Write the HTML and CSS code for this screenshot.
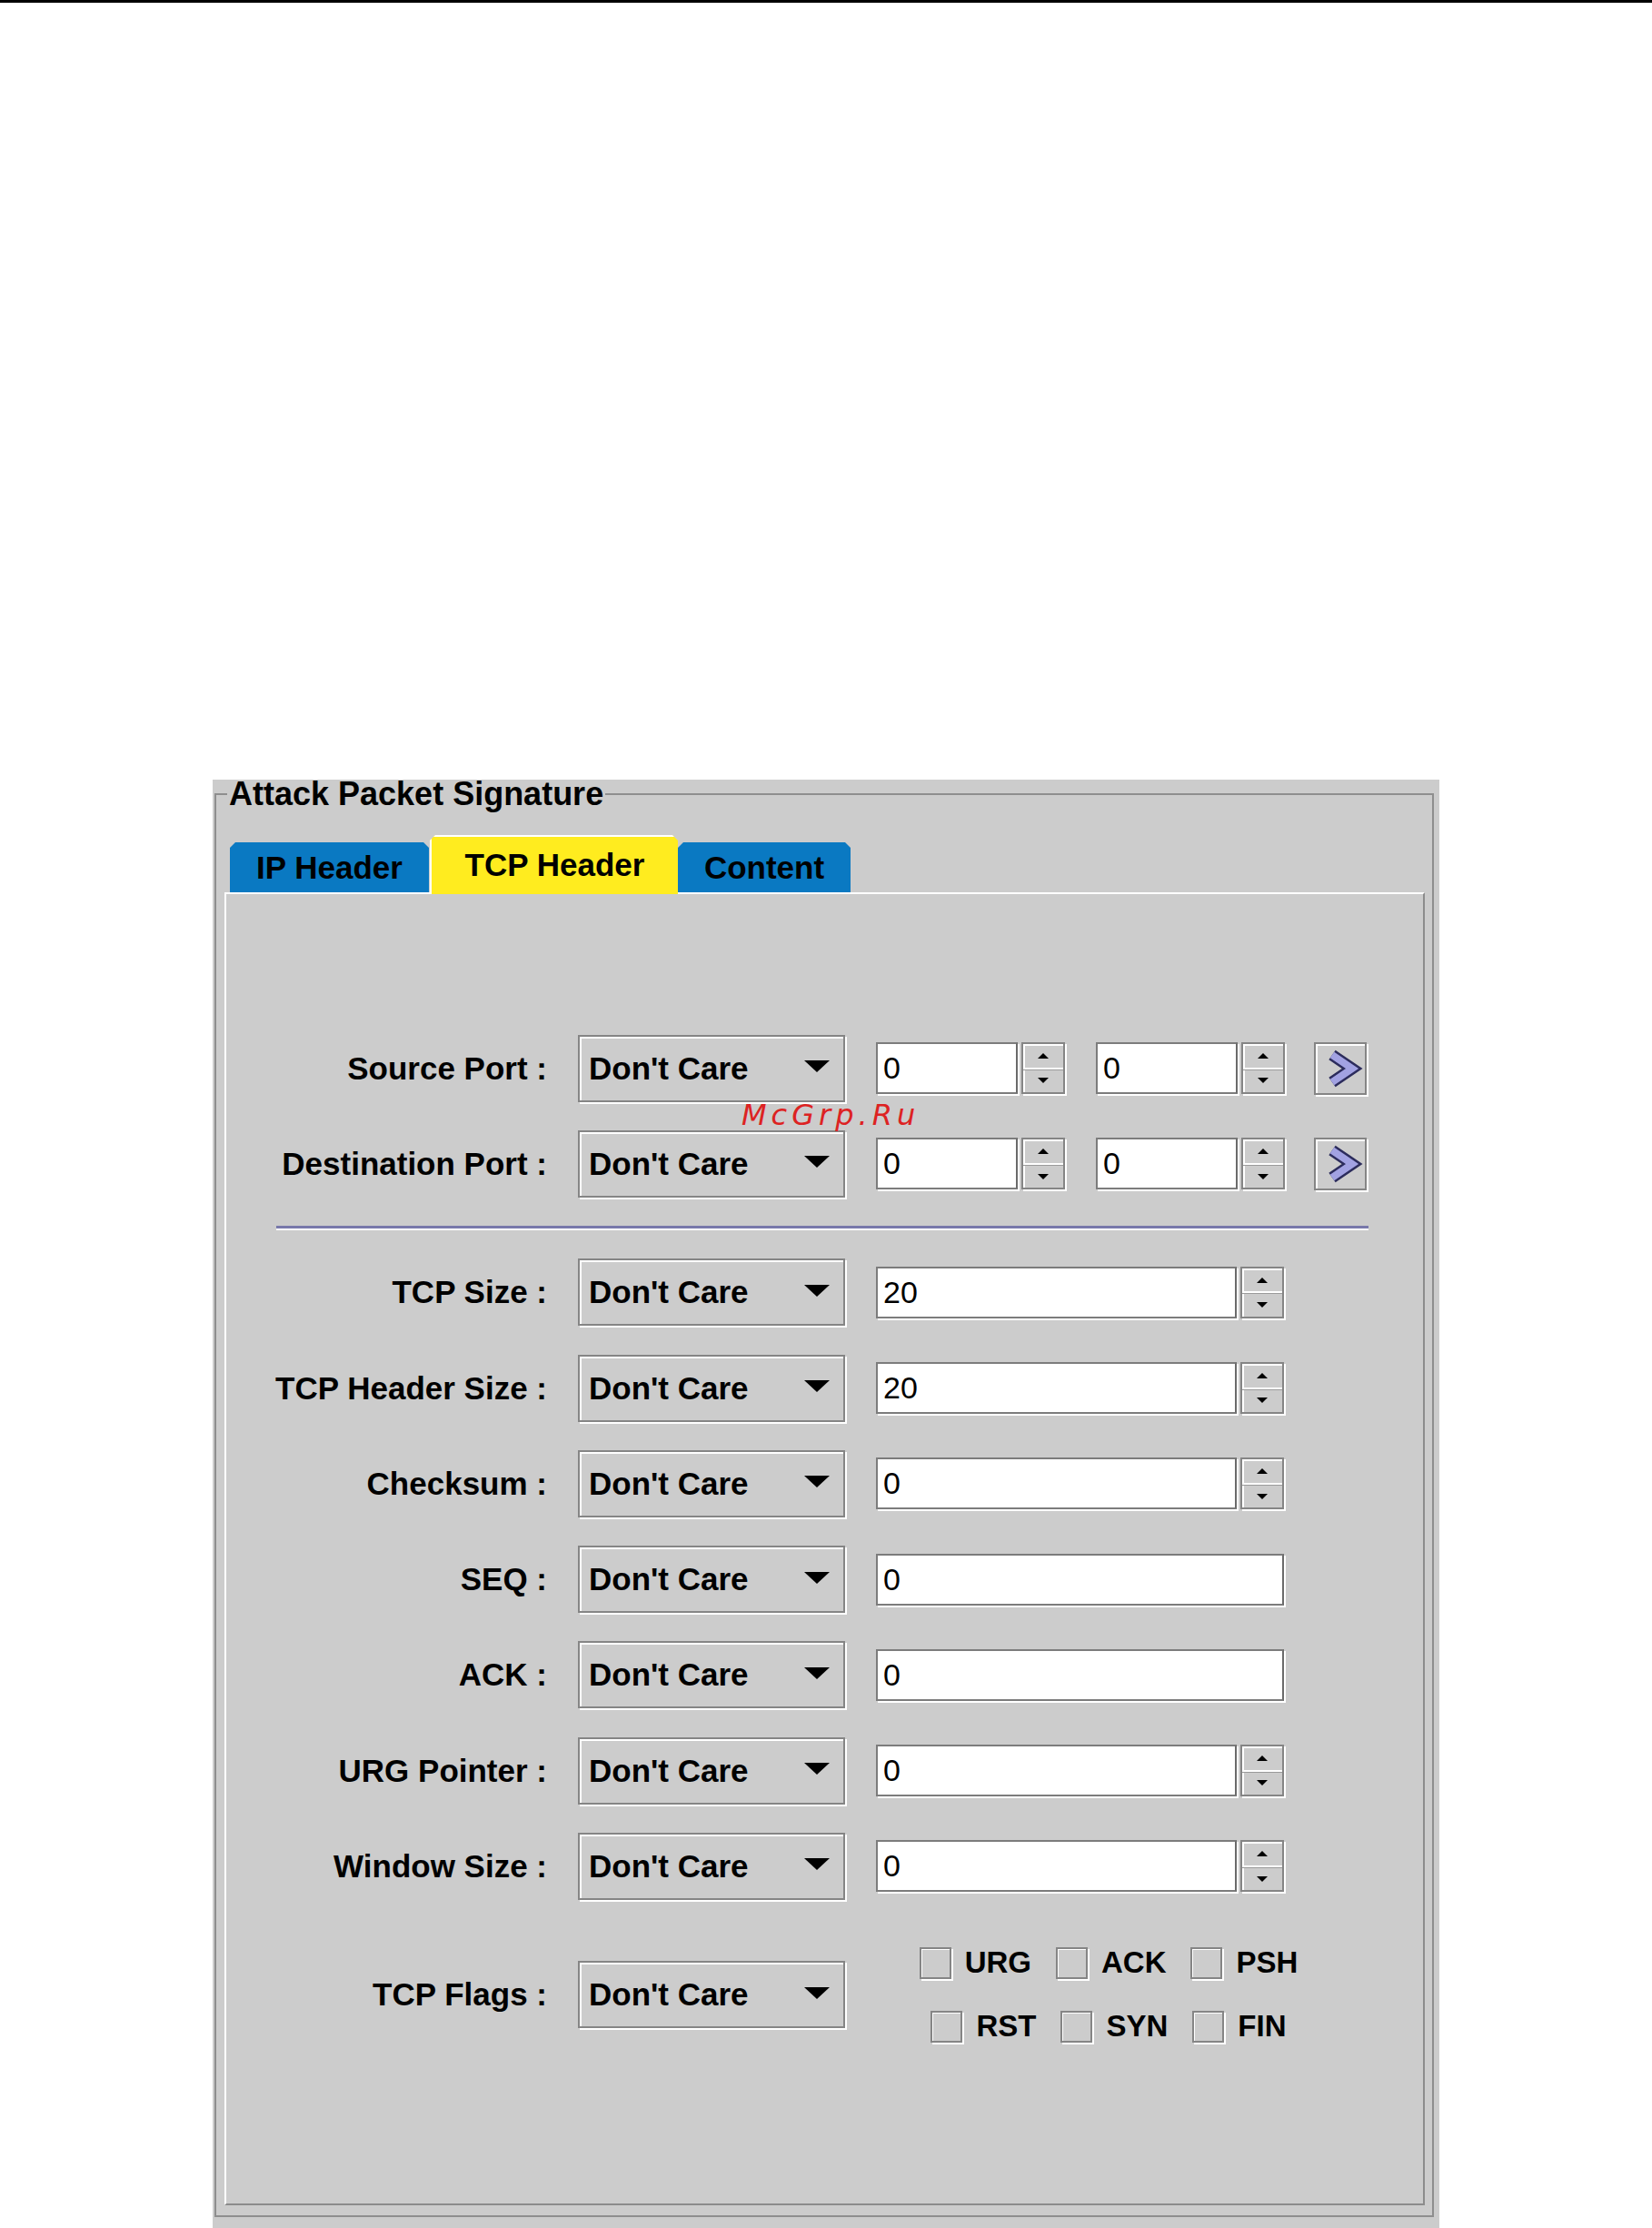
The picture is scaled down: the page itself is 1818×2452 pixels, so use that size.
FILE: index.html
```html
<html>
    <head>
        <title>Attack Packet Signature</title>
        <link rel="stylesheet" href="styles.css">
    </head>
    <body>
        <div class="topline"></div>
        <div class="panel">
            <fieldset class="sig">
                <legend>Attack Packet Signature</legend>
                <div class="tabs">
                    <div class="tab tab-ip">IP Header</div>
                    <div class="tab tab-tcp active">TCP Header</div>
                    <div class="tab tab-content">Content</div>
                </div>
                <div class="tab-body">
                    <div class="form">
                        <label class="lbl">Source Port :</label>
                        <div class="combo"><span>Don't Care</span><i class="caret"></i></div>
                        <div class="fields">
                            <input class="num w-s" value="0" />
                            <div class="spin"><b class="up"></b><b class="down"></b></div>
                            <input class="num w-s gap-l" value="0" />
                            <div class="spin"><b class="up"></b><b class="down"></b></div>
                            <button class="go"><svg width="54" height="54" viewBox="0 0 54 54"><path d="M18 12 L40 27 L18 42" fill="none" stroke="#2c2c5c" stroke-width="13"/><path d="M18 12 L40 27 L18 42" fill="none" stroke="#a2a2e2" stroke-width="8"/></svg></button>
                        </div>

                        <label class="lbl">Destination Port :</label>
                        <div class="combo"><span>Don't Care</span><i class="caret"></i></div>
                        <div class="fields">
                            <input class="num w-s" value="0" />
                            <div class="spin"><b class="up"></b><b class="down"></b></div>
                            <input class="num w-s gap-l" value="0" />
                            <div class="spin"><b class="up"></b><b class="down"></b></div>
                            <button class="go"><svg width="54" height="54" viewBox="0 0 54 54"><path d="M18 12 L40 27 L18 42" fill="none" stroke="#2c2c5c" stroke-width="13"/><path d="M18 12 L40 27 L18 42" fill="none" stroke="#a2a2e2" stroke-width="8"/></svg></button>
                        </div>

                        <div class="sep"></div>

                        <label class="lbl">TCP Size :</label>
                        <div class="combo"><span>Don't Care</span><i class="caret"></i></div>
                        <div class="fields">
                            <input class="num w-m" value="20" />
                            <div class="spin"><b class="up"></b><b class="down"></b></div>
                        </div>

                        <label class="lbl">TCP Header Size :</label>
                        <div class="combo"><span>Don't Care</span><i class="caret"></i></div>
                        <div class="fields">
                            <input class="num w-m" value="20" />
                            <div class="spin"><b class="up"></b><b class="down"></b></div>
                        </div>

                        <label class="lbl">Checksum :</label>
                        <div class="combo"><span>Don't Care</span><i class="caret"></i></div>
                        <div class="fields">
                            <input class="num w-m" value="0" />
                            <div class="spin"><b class="up"></b><b class="down"></b></div>
                        </div>

                        <label class="lbl">SEQ :</label>
                        <div class="combo"><span>Don't Care</span><i class="caret"></i></div>
                        <div class="fields">
                            <input class="num w-l" value="0" />
                        </div>

                        <label class="lbl">ACK :</label>
                        <div class="combo"><span>Don't Care</span><i class="caret"></i></div>
                        <div class="fields">
                            <input class="num w-l" value="0" />
                        </div>

                        <label class="lbl">URG Pointer :</label>
                        <div class="combo"><span>Don't Care</span><i class="caret"></i></div>
                        <div class="fields">
                            <input class="num w-m" value="0" />
                            <div class="spin"><b class="up"></b><b class="down"></b></div>
                        </div>

                        <label class="lbl">Window Size :</label>
                        <div class="combo"><span>Don't Care</span><i class="caret"></i></div>
                        <div class="fields">
                            <input class="num w-m" value="0" />
                            <div class="spin"><b class="up"></b><b class="down"></b></div>
                        </div>

                        <label class="lbl last">TCP Flags :</label>
                        <div class="combo last"><span>Don't Care</span><i class="caret"></i></div>
                        <div class="flags last">
                            <div class="flag-row">
                                <span class="flag"><i class="box"></i>URG</span>
                                <span class="flag"><i class="box"></i>ACK</span>
                                <span class="flag"><i class="box"></i>PSH</span>
                            </div>
                            <div class="flag-row">
                                <span class="flag"><i class="box"></i>RST</span>
                                <span class="flag"><i class="box"></i>SYN</span>
                                <span class="flag"><i class="box"></i>FIN</span>
                            </div>
                        </div>
                    </div>
                </div>
            </fieldset>
        </div>
        <div class="watermark">McGrp.Ru</div>
    </body>
</html>
```

FILE: styles.css
```css
html, body {
    margin: 0;
    overflow: hidden;
    background: #fff;
}

body {
    position: relative;
    font-family: "Liberation Sans", Arial, sans-serif;
    color: #000;
}

.topline {
    height: 3px;
    background: #000;
}

.panel {
    margin: 855px 0 0 234px;
    width: 1350px;
    height: 1594px;
    box-sizing: border-box;
    padding: 0 6px 0 2px;
    background: #cccccc;
}

.sig {
    margin: 0;
    padding: 29px 8px 11px 9px;
    border: 2px solid #8e8e8e;
}

.sig legend {
    margin-left: 3px;
    padding: 0 2px;
    font: bold 36px/32px "Liberation Sans", Arial, sans-serif;
}

.tabs {
    display: flex;
    align-items: flex-end;
    height: 63px;
    margin-left: 6px;
}

.tab {
    height: 55px;
    box-sizing: border-box;
    display: flex;
    align-items: center;
    justify-content: center;
    background: #0a79c2;
    font: bold 35px "Liberation Sans", Arial, sans-serif;
    clip-path: polygon(0 6px, 6px 0, calc(100% - 6px) 0, 100% 6px, 100% 100%, 0 100%);
}

.tab-ip {
    width: 219px;
}

.tab-tcp {
    width: 273px;
    margin-left: 1px;
}

.tab-content {
    width: 190px;
}

.tab.active {
    position: relative;
    height: 65px;
    margin-bottom: -2px;
    padding-bottom: 2px;
    background: #ffec1f;
    border-top: 2px solid #fff;
    border-left: 2px solid #fff;
}

.tab-body {
    height: 1445px;
    box-sizing: border-box;
    border: 2px solid;
    border-color: #fff #8c8c8c #8c8c8c #fff;
    padding-top: 154.5px;
}

.form {
    display: grid;
    grid-template-columns: 353px 294px auto;
    column-gap: 34px;
    row-gap: 31.25px;
    align-items: center;
}

.lbl {
    text-align: right;
    font: bold 35px "Liberation Sans", Arial, sans-serif;
    white-space: nowrap;
}

.combo {
    height: 74px;
    box-sizing: border-box;
    display: flex;
    align-items: center;
    justify-content: space-between;
    padding: 0 15px 0 10px;
    border: 2px solid #858585;
    box-shadow: inset 2px 2px 0 #fff, 2px 2px 0 #fff;
    font: bold 35px "Liberation Sans", Arial, sans-serif;
}

.caret {
    width: 0;
    height: 0;
    margin-bottom: 4px;
    border-left: 14px solid transparent;
    border-right: 14px solid transparent;
    border-top: 13px solid #000;
}

.fields {
    display: flex;
    align-items: center;
}

.num {
    height: 57px;
    box-sizing: border-box;
    margin: 0;
    padding: 0 6px;
    border: 2px solid #7c7c7c;
    border-right-color: #6a6a6a;
    box-shadow: 2px 2px 0 #fff;
    background: #fff;
    font: 34px "Liberation Sans", Arial, sans-serif;
    color: #000;
    outline: none;
}

.w-s {
    width: 156px;
}

.w-m {
    width: 397px;
}

.w-l {
    width: 449px;
}

.gap-l {
    margin-left: 34px;
}

.spin {
    width: 48px;
    height: 57px;
    margin-left: 4px;
    box-sizing: border-box;
    display: flex;
    flex-direction: column;
    border: 2px solid #858585;
    box-shadow: inset 2px 2px 0 #fff, 2px 2px 0 #fff;
}

.spin b {
    flex: 1;
    display: flex;
    align-items: center;
    justify-content: center;
}

.spin .up {
    border-bottom: 2px solid #fff;
    box-shadow: 0 1px 0 #9a9a9a;
}

.spin .up::after, .spin .down::after {
    content: "";
    width: 0;
    height: 0;
    border-left: 6px solid transparent;
    border-right: 6px solid transparent;
}

.spin .up::after {
    border-bottom: 6px solid #000;
}

.spin .down::after {
    border-top: 6px solid #000;
}

.go {
    width: 58px;
    height: 58px;
    margin-left: 32px;
    padding: 0;
    box-sizing: border-box;
    display: flex;
    align-items: center;
    justify-content: center;
    background: #cccccc;
    border: 2px solid #858585;
    box-shadow: inset 2px 2px 0 #fff, 2px 2px 0 #fff;
}

.sep {
    grid-column: 1 / -1;
    margin-left: 55px;
    width: 1202px;
    height: 3px;
    background: #7878aa;
    border-bottom: 2px solid #fff;
}

.last {
    margin-top: 18px;
}

.flags {
    width: 512px;
    display: flex;
    flex-direction: column;
    gap: 30px;
}

.flag-row {
    height: 40px;
    display: flex;
    align-items: center;
    justify-content: center;
    column-gap: 27px;
}

.flag {
    display: flex;
    align-items: center;
    column-gap: 15px;
    font: bold 33px "Liberation Sans", Arial, sans-serif;
}

.box {
    width: 35px;
    height: 35px;
    box-sizing: border-box;
    border: 2px solid #858585;
    box-shadow: inset 1px 1px 0 #fff, 2px 2px 0 #fff;
}

.watermark {
    position: absolute;
    left: 816px;
    top: 1211px;
    font: italic 32px/32px "DejaVu Sans", sans-serif;
    letter-spacing: 5px;
    color: #dd2222;
}
```
